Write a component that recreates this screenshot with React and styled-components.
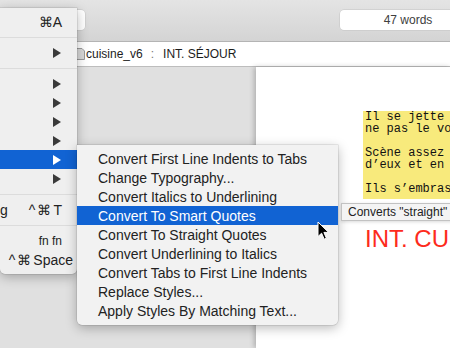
import styled, { createGlobalStyle } from "styled-components";

const GlobalStyle = createGlobalStyle`
  html, body { margin: 0; padding: 0; }
  body { font-family: "Liberation Sans", Arial, sans-serif; }
`;

const Screen = styled.div`
  position: relative;
  width: 450px;
  height: 348px;
  overflow: hidden;
  background: #dfdfdf;
  display: flex;
  flex-direction: column;
`;

const Toolbar = styled.div`
  height: 42px;
  flex: 0 0 42px;
  box-sizing: border-box;
  padding: 10px 0 11px;
  display: flex;
  justify-content: space-between;
  background: linear-gradient(#e4e4e4, #d4d4d4);
  border-bottom: 1px solid #b4b4b4;
`;

const Field = styled.div`
  flex: 0 0 ${(p) => p.width}px;
  margin-right: ${(p) => p.pull || 0}px;
  background: #fff;
  border-radius: 4px;
  box-shadow: 0 0 0 0.5px #c4c4c4;
  display: flex;
  align-items: center;
  justify-content: center;
  font-size: 12px;
  color: #404040;
`;

const Crumbs = styled.div`
  flex: 0 0 24px;
  display: flex;
  align-items: center;
  padding-left: 76px;
  background: #fff;
  border-bottom: 1px solid #bdbdbd;
  font-size: 12px;
  color: #1c1c1c;
`;

const Sep = styled.span`
  color: #777;
  margin: 0 9px 0 8px;
`;

const Editor = styled.div`
  flex: 1;
  display: flex;
`;

const Gutter = styled.div`
  flex: 0 0 256px;
  background: #e0e0e0;
`;

const Page = styled.div`
  flex: 1;
  background: #fff;
  box-shadow: -2px 0 5px rgba(0, 0, 0, 0.22);
  padding: 44px 0 0 107px;
`;

const Highlight = styled.div`
  background: #f8ea7c;
  padding: 0 0 4px 2px;
  font-family: "Liberation Mono", "Courier New", monospace;
  font-size: 12px;
  line-height: 12px;
  color: #111;
  white-space: pre;
`;

const Heading = styled.div`
  margin-top: 28px;
  padding-left: 2px;
  font-size: 24px;
  line-height: 24px;
  color: #fd2b1c;
  white-space: nowrap;
`;

const Menu = styled.div`
  position: absolute;
  left: ${(p) => p.x}px;
  top: ${(p) => p.y}px;
  width: ${(p) => p.w}px;
  padding: 4px 0 5px;
  background: ${(p) => p.bg};
  border-radius: 0 0 5px 5px;
  box-shadow: 0 3px 12px rgba(0, 0, 0, 0.28), 0 0 0 0.5px rgba(0, 0, 0, 0.15);
  font-size: 14px;
  color: #222;
  z-index: ${(p) => p.z};
`;

const Row = styled.div`
  height: 19px;
  display: flex;
  align-items: center;
  justify-content: space-between;
  padding: 0 15px 0 ${(p) => p.inset}px;
  white-space: nowrap;
  background: ${(p) => (p.active ? "#1163d3" : "transparent")};
  color: ${(p) => (p.active ? "#fff" : "#222")};
`;

const Shortcut = styled.span`
  margin-left: auto;
  margin-right: ${(p) => p.overhang || 0}px;
  font-size: ${(p) => (p.small ? 12 : 14)}px;
`;

const Mods = styled.span`
  letter-spacing: ${(p) => (p.tight ? 0 : 2)}px;
`;

const Arrow = styled.span`
  display: block;
  width: 0;
  height: 0;
  margin: 0 1px 0 auto;
  border-top: 5px solid transparent;
  border-bottom: 5px solid transparent;
  border-left: 8px solid ${(p) => (p.active ? "#fff" : "#3a3a3a")};
`;

const Divider = styled.div`
  height: 12px;
  display: flex;
  align-items: center;
  &::after {
    content: "";
    flex: 1;
    height: 1px;
    background: #dcdcdc;
  }
`;

const Tip = styled.div`
  position: absolute;
  left: 341px;
  top: 203px;
  height: 18px;
  padding: 0 30px 0 6px;
  box-sizing: border-box;
  display: flex;
  align-items: center;
  background: #f4f4f4;
  border: 1px solid #c2c2c2;
  box-shadow: 0 1px 3px rgba(0, 0, 0, 0.15);
  font-size: 12px;
  color: #222;
  white-space: nowrap;
  z-index: 4;
`;

const Pointer = styled.svg`
  position: absolute;
  left: 317px;
  top: 221px;
  z-index: 5;
`;

const leftItems = [
  { mods: "⌘", key: "A", tight: true },
  { sep: true },
  { sub: true },
  { sep: true },
  { sub: true },
  { sub: true },
  { sub: true },
  { sub: true },
  { sub: true, active: true },
  { sub: true },
  { sep: true },
  { label: "g", mods: "^⌘", key: "T" },
  { sep: true },
  { mods: "fn ", key: "fn", small: true, tight: true },
  { mods: "^⌘", key: "Space", overhang: -11 },
];

const convertItems = [
  "Convert First Line Indents to Tabs",
  "Change Typography...",
  "Convert Italics to Underlining",
  "Convert To Smart Quotes",
  "Convert To Straight Quotes",
  "Convert Underlining to Italics",
  "Convert Tabs to First Line Indents",
  "Replace Styles...",
  "Apply Styles By Matching Text...",
];

const DocIcon = () => (
  <svg width="9" height="12" viewBox="0 0 9 12" style={{ marginRight: 1 }}>
    <path d="M0.5 0.5 H6 L8.5 3 V11.5 H0.5 Z" fill="#d8d8d8" stroke="#9a9a9a" />
  </svg>
);

const App = () => {
  return (
    <Screen>
      <GlobalStyle />
      <Toolbar>
        <Field width={85} />
        <Field width={136} pull={-26}>
          47 words
        </Field>
      </Toolbar>
      <Crumbs>
        <DocIcon />
        cuisine_v6
        <Sep>:</Sep>
        INT. SÉJOUR
      </Crumbs>
      <Editor>
        <Gutter />
        <Page>
          <Highlight>
            {"Il se jette\nne pas le vo\n\nScène assez\nd’eux et en\n\nIls s’embras"}
          </Highlight>
          <Heading>INT. CU</Heading>
        </Page>
      </Editor>

      <Menu x={0} y={8} w={77} bg="#efefef" z={2}>
        {leftItems.map((it, i) =>
          it.sep ? (
            <Divider key={i} />
          ) : (
            <Row key={i} inset={0} active={it.active}>
              {it.label && <span>{it.label}</span>}
              {it.sub ? (
                <Arrow active={it.active} />
              ) : (
                <Shortcut small={it.small} overhang={it.overhang}>
                  <Mods tight={it.tight}>{it.mods}</Mods>
                  {it.key}
                </Shortcut>
              )}
            </Row>
          )
        )}
      </Menu>

      <Menu x={77} y={145} w={261} bg="#f2f2f2" z={3}>
        {convertItems.map((t, i) => (
          <Row key={t} inset={21} active={i === 3}>
            <span>{t}</span>
          </Row>
        ))}
      </Menu>

      <Tip>Converts "straight"</Tip>

      <Pointer width="13" height="20" viewBox="0 0 13 20">
        <path
          d="M1 1 L1 15.5 L4.6 12.2 L7.2 18.2 L9.4 17.2 L6.9 11.4 L11.6 11.4 Z"
          fill="#000"
          stroke="#fff"
          strokeWidth="1"
          strokeLinejoin="round"
        />
      </Pointer>
    </Screen>
  );
};

export default App;
